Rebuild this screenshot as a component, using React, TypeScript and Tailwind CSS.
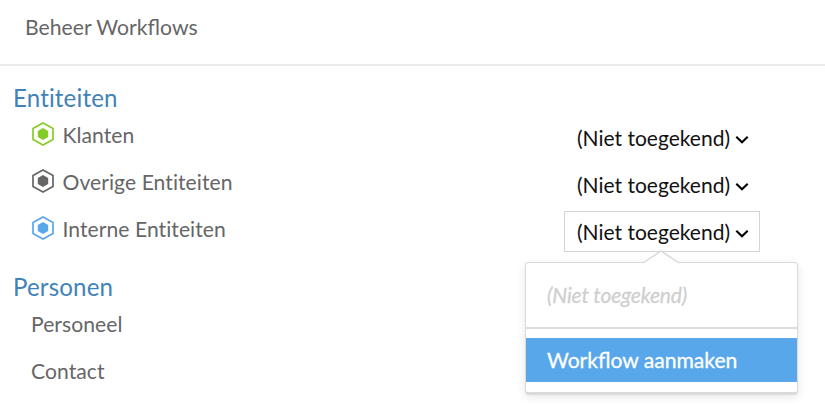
import React from "react";

const HexIcon = ({ color }: { color: string }) => (
  <svg width="22" height="24" viewBox="0 0 22 24" className="ml-[1px] mr-[8.5px] -mt-[1px] shrink-0">
    <path d="M11 1L21 6.5V17.5L11 23L1 17.5V6.5Z" fill="none" stroke={color} strokeWidth="1.7" />
    <path d="M11 6L16.2 9V15L11 18L5.8 15V9Z" fill={color} />
  </svg>
);

const Chevron = () => (
  <svg width="14" height="10" viewBox="0 0 14 10" className="ml-[5px] mt-[4px] shrink-0">
    <path d="M1.3 1.8L7 7.3L12.7 1.8" fill="none" stroke="#000" strokeWidth="2.1" />
  </svg>
);

const DropdownMenu = () => (
  <div className="absolute left-[-40px] top-[50px] z-10 h-[133px] w-[273px] rounded-[4px] border border-b-[3px] border-[#dadada] bg-white shadow-[0_2px_10px_rgba(0,0,0,0.1)]">
    <svg width="38" height="15" viewBox="0 0 38 15" className="absolute left-[116px] top-[-13px]">
      <path d="M0 15V13.5L19 1L37 13.5V15Z" fill="#fff" />
      <path d="M1 13L19 1L37 13" fill="none" stroke="#dadada" strokeWidth="1.5" />
    </svg>
    <div className="flex h-[66px] items-center border-b-2 border-[#dcdcdc] pl-[21px] text-[21px] italic tracking-[-0.15px] text-[#cfcfcf] [-webkit-text-stroke:0.3px_#cfcfcf]">
      (Niet toegekend)
    </div>
    <div className="mt-[9px] flex h-[44px] items-center bg-[#58a7ea] pl-[21px] text-[21.1px] text-white [-webkit-text-stroke:0.3px_#fff]">
      Workflow aanmaken
    </div>
  </div>
);

const Picker = ({ open = false }: { open?: boolean }) => (
  <div
    className={`relative mt-[5px] flex h-[41px] w-[196px] items-center whitespace-nowrap border pl-[12px] text-[21px] text-[#111] ${
      open ? "border-[#d4d4d4]" : "border-transparent"
    }`}
  >
    <span>(Niet toegekend)</span>
    <Chevron />
    {open && <DropdownMenu />}
  </div>
);

const Row = ({ label, color, picker, open }: { label: string; color?: string; picker?: boolean; open?: boolean }) => (
  <div className="flex h-[47px] items-start justify-between pl-[31px] pr-[65px]">
    <div className="flex h-[45px] items-center tracking-[0.06px] [font-variant-ligatures:none]">
      {color && <HexIcon color={color} />}
      <span>{label}</span>
    </div>
    {picker && <Picker open={open} />}
  </div>
);

export default function App() {
  return (
    <div className="h-[405px] w-[825px] overflow-hidden bg-white font-[Lato,sans-serif] text-[21.1px] leading-[26px] text-[#666]">
      <header className="flex h-[66px] items-start border-b-2 border-[#ebebeb] pl-[25px] pt-[14px]">
        <span className="text-[21.2px]">Beheer Workflows</span>
      </header>
      <section className="pt-[19px]">
        <h2 className="h-[27px] pl-[13px] text-[24.1px] leading-[25px] tracking-[0.15px] text-[#4183b8] [font-variant-ligatures:none]">Entiteiten</h2>
        <Row label="Klanten" color="#86cc26" picker />
        <Row label="Overige Entiteiten" color="#666666" picker />
        <Row label="Interne Entiteiten" color="#58a7ea" picker open />
      </section>
      <section className="pt-[21px]">
        <h2 className="h-[27px] pl-[13px] text-[24.1px] leading-[25px] tracking-[0.15px] text-[#4183b8] [font-variant-ligatures:none]">Personen</h2>
        <Row label="Personeel" />
        <Row label="Contact" />
      </section>
    </div>
  );
}
